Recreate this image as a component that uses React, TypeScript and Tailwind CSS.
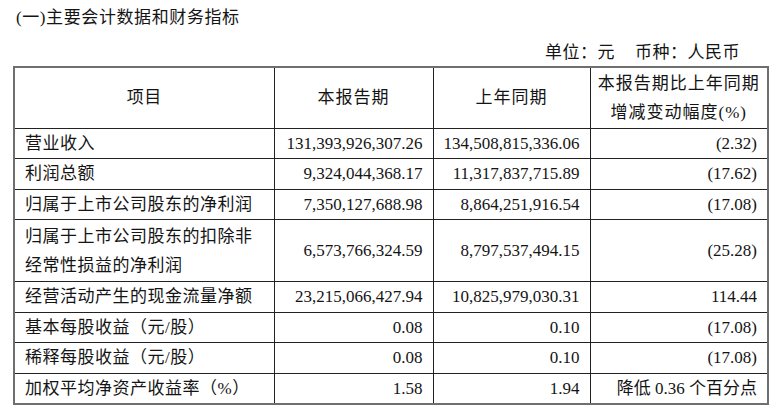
const rows: { name: string[]; cur: string; prev: string; chg: string }[] = [
  { name: ['营业收入'], cur: '131,393,926,307.26', prev: '134,508,815,336.06', chg: '(2.32)' },
  { name: ['利润总额'], cur: '9,324,044,368.17', prev: '11,317,837,715.89', chg: '(17.62)' },
  { name: ['归属于上市公司股东的净利润'], cur: '7,350,127,688.98', prev: '8,864,251,916.54', chg: '(17.08)' },
  {
    name: ['归属于上市公司股东的扣除非', '经常性损益的净利润'],
    cur: '6,573,766,324.59',
    prev: '8,797,537,494.15',
    chg: '(25.28)',
  },
  { name: ['经营活动产生的现金流量净额'], cur: '23,215,066,427.94', prev: '10,825,979,030.31', chg: '114.44' },
  { name: ['基本每股收益（元/股）'], cur: '0.08', prev: '0.10', chg: '(17.08)' },
  { name: ['稀释每股收益（元/股）'], cur: '0.08', prev: '0.10', chg: '(17.08)' },
  { name: ['加权平均净资产收益率（%）'], cur: '1.58', prev: '1.94', chg: '降低 0.36 个百分点' },
]

export default function App() {
  return (
    <div
      className="h-[417px] w-[777px] overflow-hidden bg-white text-[17px] text-[#141414]"
      style={{ fontFamily: '"Liberation Serif", "Noto Sans CJK SC", serif' }}
    >
      <div className="flex pt-[6px] leading-[24px] tracking-[0.6px]">
        <span className="ml-[16px]">(一)主要会计数据和财务指标</span>
      </div>

      <div className="mt-[12px] flex justify-end pr-[37px] leading-[22px] tracking-[0.5px]">
        <span>单位：元</span>
        <span className="ml-[20px]">币种：人民币</span>
      </div>

      <table className="ml-[13px] mt-[2px] w-[754px] table-fixed border-collapse border-2 border-[#6f6f6f]">
        <colgroup>
          <col className="w-[260px]" />
          <col className="w-[159px]" />
          <col className="w-[157px]" />
          <col className="w-[178px]" />
        </colgroup>
        <thead>
          <tr className="h-[61px]">
            <th className="border border-[#222] font-normal tracking-[0.5px]">项目</th>
            <th className="border border-[#222] font-normal tracking-[1px]">本报告期</th>
            <th className="border border-[#222] font-normal tracking-[1px]">上年同期</th>
            <th className="border border-[#222] font-normal leading-[29px] tracking-[1px]">
              本报告期比上年同期
              <br />
              增减变动幅度(%)
            </th>
          </tr>
        </thead>
        <tbody>
          {rows.map((r) => (
            <tr key={r.name.join('')} className={r.name.length > 1 ? 'h-[62px]' : 'h-[30.5px]'}>
              <td className="border border-[#222] pl-[10px] leading-[29px] tracking-[0.5px]">
                {r.name.map((n) => (
                  <div key={n}>{n}</div>
                ))}
              </td>
              <td className="border border-[#222] pr-[10px] text-right leading-[29px]">{r.cur}</td>
              <td className="border border-[#222] pr-[10px] text-right leading-[29px]">{r.prev}</td>
              <td className="border border-[#222] pr-[10px] text-right leading-[29px]">{r.chg}</td>
            </tr>
          ))}
        </tbody>
      </table>
    </div>
  )
}
